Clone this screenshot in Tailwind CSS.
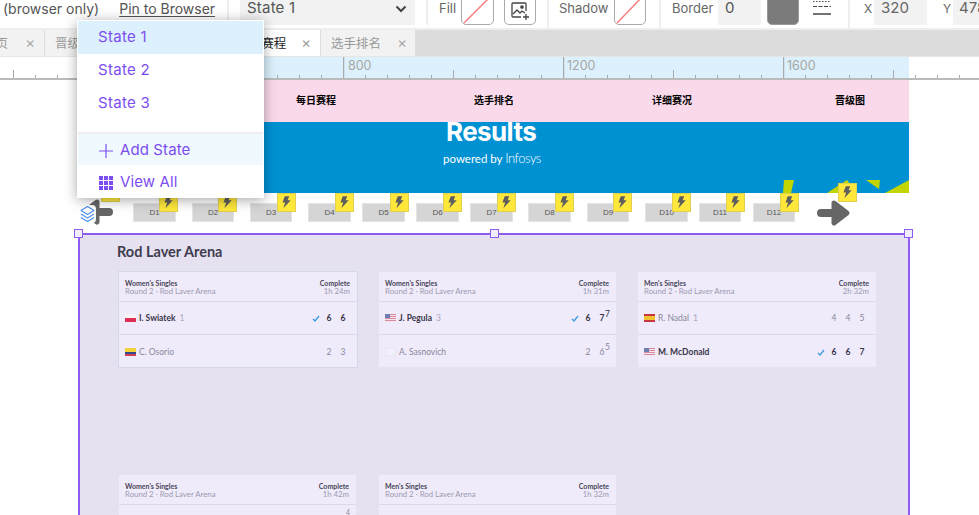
<!DOCTYPE html>
<html><head><meta charset="utf-8"><script src="https://cdn.jsdelivr.net/npm/@tailwindcss/browser@4"></script></head>
<body class="m-0 bg-white">
<div class="relative w-[979px] h-[515px] overflow-hidden bg-white font-['Inter',sans-serif] flex flex-col">
  <!-- toolbar -->
  <div class="h-[30px] flex-none flex items-start border-b-2 border-[#eeeeee] text-[#555555] overflow-hidden">
    <div class="w-[229px] flex-none h-[33px] -mt-2 flex items-center border-r-2 border-[#eeeeee] text-[14px]"><span class="ml-[3px]">(browser only)</span><span class="ml-[20px] underline underline-offset-2">Pin to Browser</span></div>
    <div class="w-[199px] flex-none -mt-2 border-r-2 border-[#eeeeee] h-[33px] pl-[11px]"><div class="w-[175px] h-[33px] bg-[#f2f2f2] flex items-center justify-between pl-[7px] pr-[8px] text-[15px] tracking-[0.2px]"><span>State 1</span><svg width="12" height="8" viewBox="0 0 12 8"><path d="M1.5 1.5 6 6l4.5-4.500" fill="none" stroke="#444" stroke-width="2"/></svg></div></div>
    <div class="w-[121px] flex-none -mt-2 h-[38px] border-r-2 border-[#eeeeee] flex items-start pt-0">
      <span class="ml-[11px] mt-[6px] text-[13px] text-[#666666] leading-5 w-[16px]">Fill</span>
      <div class="ml-[6px] w-[33px] h-[33px] rounded-[5px] border border-[#aaaaaa] overflow-hidden"><svg width="31" height="31" viewBox="0 0 31 31"><line x1="2" y1="30" x2="31" y2="1" stroke="#f77f7f" stroke-width="1.5"/></svg></div>
      <div class="ml-[10px] w-[32px] h-[33px] rounded-[5px] border border-[#aaaaaa] flex items-end justify-center pb-[3px]"><svg width="20" height="20" viewBox="0 0 20 20" fill="none" stroke="#444" stroke-width="1.3"><path d="M16 10V3a1 1 0 0 0-1-1H3a1 1 0 0 0-1 1v12a1 1 0 0 0 1 1h8"/><path d="M3 13l4-4 3 3 2-2 3 2"/><circle cx="12" cy="6" r="1.2" fill="#444"/><path d="M16 13v6M13 16h6"/></svg></div>
    </div>
    <div class="w-[112px] flex-none -mt-2 h-[38px] border-r-2 border-[#eeeeee] flex items-start">
      <span class="ml-[10px] mt-[6px] text-[13px] text-[#666666] leading-5 w-[48px]">Shadow</span>
      <div class="ml-[7px] w-[32px] h-[33px] rounded-[5px] border border-[#aaaaaa] overflow-hidden"><svg width="30" height="31" viewBox="0 0 30 31"><line x1="2" y1="30" x2="30" y2="1" stroke="#f77f7f" stroke-width="1.5"/></svg></div>
    </div>
    <div class="w-[189px] flex-none -mt-2 h-[38px] border-r-2 border-[#eeeeee] flex items-start">
      <span class="ml-[11px] mt-[6px] text-[13px] text-[#666666] leading-5 w-[40px]">Border</span>
      <div class="ml-[6px] w-[43px] h-[33px] bg-[#f2f2f2] text-[15px] pl-[7px] flex items-center">0</div>
      <div class="ml-[6px] w-[32px] h-[33px] rounded-[5px] bg-[#7b7b7b] border border-[#999999]"></div>
      <svg class="ml-[14px] mt-[8px]" width="18" height="17" viewBox="0 0 18 17" stroke="#444"><path d="M0 1.500h18" stroke-dasharray="1.5 1.5"/><path d="M0 6.500h18" stroke-dasharray="4 1.5"/><path d="M0 14h18" stroke-width="1.5"/></svg>
    </div>
    <div class="flex-none -mt-2 h-[33px] flex items-center text-[#666666]">
      <span class="ml-[14px] text-[12px] w-[10px]">X</span>
      <div class="w-[53px] h-[33px] bg-[#f2f2f2] text-[15px] pl-[7px] flex items-center">320</div>
      <span class="ml-[16px] text-[12px] w-[10px]">Y</span>
      <div class="w-[60px] h-[33px] bg-[#f2f2f2] text-[15px] pl-[6px] flex items-center">478</div>
    </div>
  </div>
  <!-- tabs -->
  <div class="h-[26px] flex-none bg-[#dcdcdc] flex font-['Noto_Sans_CJK_SC',sans-serif] text-[12.5px] text-[#999999] whitespace-nowrap">
    <div class="w-[44px] bg-[#f2f2f2] flex items-center justify-between pr-[9px] overflow-hidden"><span class="-ml-[17px]">首页</span><span class="font-['Inter'] text-[15px] font-light">×</span></div>
    <div class="ml-px w-[178px] bg-[#f2f2f2] flex items-center pl-[10px]">晋级图</div>
    <div class="ml-px w-[96px] bg-white flex items-center justify-end pr-[9px] text-[#222222]"><span class="mr-[15px]">每日赛程</span><span class="font-['Inter'] text-[15px] font-light text-[#888888]">×</span></div>
    <div class="ml-px w-[94px] bg-[#f2f2f2] flex items-center justify-between pl-[10px] pr-[8px]"><span>选手排名</span><span class="font-['Inter'] text-[15px] font-light">×</span></div>
  </div>
  <!-- ruler -->
  <div class="h-[24px] flex-none relative bg-white overflow-hidden">
    <div class="absolute left-[78px] w-[831px] top-0 bottom-0 bg-[#dcf1fd]"></div>
    <svg class="absolute inset-0" width="979" height="24" viewBox="0 0 979 24">
      <defs><pattern id="t" patternUnits="userSpaceOnUse" x="123" y="0" width="220" height="24"><g stroke="#aaaaaa"><path d="M.5 0v24" stroke-width="1.5"/><path d="M22.500 19v4M44.500 19v4M66.500 19v4M88.500 19v4M132.500 19v4M154.500 19v4M176.500 19v4M198.500 19v4"/><path d="M110.500 14v9"/></g></pattern></defs>
      <rect width="979" height="24" fill="url(#t)"/><rect y="22" width="979" height="2" fill="#bbbbbb"/>
    </svg>
    <div class="absolute left-0 right-0 top-0 h-px bg-[#e6e6e6]"></div>
    <span class="absolute left-[348px] top-0 text-[12.5px] text-[#a6a6a6] leading-5">800</span>
    <span class="absolute left-[567px] top-0 text-[12.5px] text-[#a6a6a6] leading-5">1200</span>
    <span class="absolute left-[787px] top-0 text-[12.5px] text-[#a6a6a6] leading-5">1600</span>
  </div>
  <!-- canvas -->
  <div class="relative flex-1">
    <div class="absolute left-[78px] top-0 w-[831px] h-[42px] bg-[#fadaea] font-['Noto_Sans_CJK_SC',sans-serif] text-[10px] font-bold text-black">
      <span class="absolute left-[218px] top-[13px] leading-[14px]">每日赛程</span><span class="absolute left-[396px] top-[13px] leading-[14px]">选手排名</span><span class="absolute left-[574px] top-[13px] leading-[14px]">详细赛况</span><span class="absolute left-[757px] top-[13px] leading-[14px]">晋级图</span>
    </div>
    <div class="absolute left-[78px] top-[42px] w-[831px] h-[71px] bg-[#0091d3] overflow-hidden text-white font-['Lato',sans-serif]">
      <div class="absolute left-[368px] -top-[6px] text-[26px] font-bold leading-[32px] font-['Inter'] tracking-[-0.6px]">Results</div>
      <div class="absolute left-[365px] top-[29px] text-[11.5px] leading-[14px]">powered by <span class="font-light text-[13px] tracking-[-0.5px]">Infosys</span></div>
      <svg class="absolute left-0 top-0" width="831" height="71" viewBox="0 0 831 71" fill="#c3d500"><path d="M706 58h10l-3 13h-8zM749 71l20-13 10 13zM788 58h14l-1 9zM807 71l24-13v13z"/></svg>
    </div>
    <!-- days -->
    <div class="absolute left-[133px] top-[123px] w-[43px] h-[19px] bg-[#d5d5d5] border border-[#e4e4e4] text-[8px] font-['Liberation_Sans'] text-[#555555] flex items-center justify-center">D1</div>
    <div class="absolute left-[192px] top-[123px] w-[42px] h-[19px] bg-[#d5d5d5] border border-[#e4e4e4] text-[8px] font-['Liberation_Sans'] text-[#555555] flex items-center justify-center">D2</div>
    <div class="absolute left-[250px] top-[123px] w-[42px] h-[19px] bg-[#d5d5d5] border border-[#e4e4e4] text-[8px] font-['Liberation_Sans'] text-[#555555] flex items-center justify-center">D3</div>
    <div class="absolute left-[308px] top-[123px] w-[43px] h-[19px] bg-[#d5d5d5] border border-[#e4e4e4] text-[8px] font-['Liberation_Sans'] text-[#555555] flex items-center justify-center">D4</div>
    <div class="absolute left-[362px] top-[123px] w-[43px] h-[19px] bg-[#d5d5d5] border border-[#e4e4e4] text-[8px] font-['Liberation_Sans'] text-[#555555] flex items-center justify-center">D5</div>
    <div class="absolute left-[416px] top-[123px] w-[43px] h-[19px] bg-[#d5d5d5] border border-[#e4e4e4] text-[8px] font-['Liberation_Sans'] text-[#555555] flex items-center justify-center">D6</div>
    <div class="absolute left-[470px] top-[123px] w-[43px] h-[19px] bg-[#d5d5d5] border border-[#e4e4e4] text-[8px] font-['Liberation_Sans'] text-[#555555] flex items-center justify-center">D7</div>
    <div class="absolute left-[528px] top-[123px] w-[43px] h-[19px] bg-[#d5d5d5] border border-[#e4e4e4] text-[8px] font-['Liberation_Sans'] text-[#555555] flex items-center justify-center">D8</div>
    <div class="absolute left-[587px] top-[123px] w-[42px] h-[19px] bg-[#d5d5d5] border border-[#e4e4e4] text-[8px] font-['Liberation_Sans'] text-[#555555] flex items-center justify-center">D9</div>
    <div class="absolute left-[645px] top-[123px] w-[43px] h-[19px] bg-[#d5d5d5] border border-[#e4e4e4] text-[8px] font-['Liberation_Sans'] text-[#555555] flex items-center justify-center">D10</div>
    <div class="absolute left-[699px] top-[123px] w-[42px] h-[19px] bg-[#d5d5d5] border border-[#e4e4e4] text-[8px] font-['Liberation_Sans'] text-[#555555] flex items-center justify-center">D11</div>
    <div class="absolute left-[753px] top-[123px] w-[42px] h-[19px] bg-[#d5d5d5] border border-[#e4e4e4] text-[8px] font-['Liberation_Sans'] text-[#555555] flex items-center justify-center">D12</div>
    <!-- badges -->
    <svg width="0" height="0" class="absolute"><defs><path id="b" d="M7.500 1.500h5L10.800 6h3.400L6 15l2-6.500H5z" fill="#5e5e5e"/></defs></svg>
    <div class="absolute left-[101px] top-[112px] w-[19px] h-[10px] bg-[#ffe83b] border border-[#e0cf50]"></div>
    <svg class="absolute left-[159px] top-[113px] bg-[#ffe83b] border border-[#e0cf50]" width="19" height="19" viewBox="0 0 19 17"><use href="#b"/></svg>
    <svg class="absolute left-[218px] top-[113px] bg-[#ffe83b] border border-[#e0cf50]" width="19" height="19" viewBox="0 0 19 17"><use href="#b"/></svg>
    <svg class="absolute left-[277px] top-[113px] bg-[#ffe83b] border border-[#e0cf50]" width="19" height="19" viewBox="0 0 19 17"><use href="#b"/></svg>
    <svg class="absolute left-[335px] top-[113px] bg-[#ffe83b] border border-[#e0cf50]" width="19" height="19" viewBox="0 0 19 17"><use href="#b"/></svg>
    <svg class="absolute left-[390px] top-[113px] bg-[#ffe83b] border border-[#e0cf50]" width="19" height="19" viewBox="0 0 19 17"><use href="#b"/></svg>
    <svg class="absolute left-[443px] top-[113px] bg-[#ffe83b] border border-[#e0cf50]" width="19" height="19" viewBox="0 0 19 17"><use href="#b"/></svg>
    <svg class="absolute left-[497px] top-[113px] bg-[#ffe83b] border border-[#e0cf50]" width="19" height="19" viewBox="0 0 19 17"><use href="#b"/></svg>
    <svg class="absolute left-[555px] top-[113px] bg-[#ffe83b] border border-[#e0cf50]" width="19" height="19" viewBox="0 0 19 17"><use href="#b"/></svg>
    <svg class="absolute left-[613px] top-[113px] bg-[#ffe83b] border border-[#e0cf50]" width="19" height="19" viewBox="0 0 19 17"><use href="#b"/></svg>
    <svg class="absolute left-[672px] top-[113px] bg-[#ffe83b] border border-[#e0cf50]" width="19" height="19" viewBox="0 0 19 17"><use href="#b"/></svg>
    <svg class="absolute left-[726px] top-[113px] bg-[#ffe83b] border border-[#e0cf50]" width="19" height="19" viewBox="0 0 19 17"><use href="#b"/></svg>
    <svg class="absolute left-[780px] top-[113px] bg-[#ffe83b] border border-[#e0cf50]" width="19" height="19" viewBox="0 0 19 17"><use href="#b"/></svg>
    <!-- arrows and layers -->
    <svg class="absolute left-[80px] top-[118px]" width="34" height="28" viewBox="0 0 34 28" fill="#666666" stroke="#666666" stroke-linecap="round" stroke-linejoin="round"><path d="M29 14H9" stroke-width="8"/><path d="M17 4 4 14l13 10z" stroke-width="5"/></svg>
    <svg class="absolute left-[79px] top-[125px] bg-white rounded-sm" width="17" height="18" viewBox="0 0 17 18" fill="none" stroke="#4a8ef0" stroke-width="1.1" stroke-linejoin="round"><path d="M8.500 1.500 15 5.500 8.500 9.500 2 5.500z"/><path d="M2 9l6.500 4L15 9M2 12.500l6.500 4 6.500-4"/></svg>
    <svg class="absolute left-[817px] top-[119px]" width="34" height="28" viewBox="0 0 34 28" fill="#666666" stroke="#666666" stroke-linecap="round" stroke-linejoin="round"><path d="M4 14h21" stroke-width="8"/><path d="M17 4l13 10-13 10z" stroke-width="5"/></svg>
    <svg class="absolute left-[838px] top-[103px] bg-[#ffe83b] border border-[#e0cf50]" width="19" height="19" viewBox="0 0 19 17"><use href="#b"/></svg>
    <!-- frame -->
    <div class="absolute left-[78px] top-[153px] w-[832px] h-[320px] bg-[#e5e1f1] border-2 border-[#8f5cf0] border-b-0 font-['Lato',sans-serif]">
      <div class="absolute left-[37px] top-[7px] text-[14.5px] leading-5 font-bold text-[#413d4f]">Rod Laver Arena</div>
      <div class="absolute left-[38px] top-[36px] w-[240px] h-[97px] bg-[#efebfb] border border-[#d5d8ec] flex flex-col">
        <div class="h-[30px] flex-none border-b border-[#dcd9ec] flex justify-between pl-[6px] pr-[7px] pt-[7px] text-[7px] leading-[8px]"><div><div class="font-bold text-[#4a4658]">Women's Singles</div><div class="text-[#9d9ab0] text-[7.8px]">Round 2 · Rod Laver Arena</div></div><div class="text-right"><div class="font-bold text-[#4a4658]">Complete</div><div class="text-[#9d9ab0] text-[7.8px]">1h 24m</div></div></div>
        <div class="h-[33px] flex-none border-b border-[#dcd9ec] flex items-center pl-[6px] pr-[7px] text-[8.500px] font-bold text-[#3a3648]"><svg class="mr-[3px]" width="11" height="8" viewBox="0 0 11 8"><rect width="11" height="4" fill="#f5f3f8"/><rect y="4" width="11" height="4" fill="#dc2f55"/></svg><span>I. Swiatek</span><span class="ml-1 font-normal text-[#aaa8bb]">1</span><svg class="ml-auto mr-[2px]" width="8" height="7" viewBox="0 0 8 7" fill="none" stroke="#3b9be0" stroke-width="1.3"><path d="M1 4l2 2 4-5"/></svg><span class="w-[14px] text-center">6</span><span class="w-[14px] text-center">6</span></div>
        <div class="flex-1 flex items-center pl-[6px] pr-[7px] pt-[2px] text-[8.500px] text-[#8a8799]"><svg class="mr-[3px]" width="11" height="8" viewBox="0 0 11 8"><rect width="11" height="4" fill="#f4d23c"/><rect y="4" width="11" height="2" fill="#33478f"/><rect y="6" width="11" height="2" fill="#cf3d54"/></svg><span>C. Osorio</span><span class="ml-auto w-[14px] text-center">2</span><span class="w-[14px] text-center">3</span></div>
      </div>
      <div class="absolute left-[298px] top-[36px] w-[239px] h-[97px] bg-[#efebfb] border border-[#e6e2f4] flex flex-col">
        <div class="h-[30px] flex-none border-b border-[#dcd9ec] flex justify-between pl-[6px] pr-[7px] pt-[7px] text-[7px] leading-[8px]"><div><div class="font-bold text-[#4a4658]">Women's Singles</div><div class="text-[#9d9ab0] text-[7.8px]">Round 2 · Rod Laver Arena</div></div><div class="text-right"><div class="font-bold text-[#4a4658]">Complete</div><div class="text-[#9d9ab0] text-[7.8px]">1h 31m</div></div></div>
        <div class="h-[33px] flex-none border-b border-[#dcd9ec] flex items-center pl-[6px] pr-[7px] text-[8.500px] font-bold text-[#3a3648]"><svg class="mr-[3px]" width="11" height="8" viewBox="0 0 11 8"><rect width="11" height="8" fill="#d98a9c"/><path d="M0 1.500h11M0 3.500h11M0 5.500h11M0 7.500h11" stroke="#f3e6ee"/><rect width="5" height="4" fill="#6f7db5"/></svg><span>J. Pegula</span><span class="ml-1 font-normal text-[#aaa8bb]">3</span><svg class="ml-auto mr-[2px]" width="8" height="7" viewBox="0 0 8 7" fill="none" stroke="#3b9be0" stroke-width="1.3"><path d="M1 4l2 2 4-5"/></svg><span class="w-[14px] text-center">6</span><span class="w-[14px] text-center relative">7<span class="absolute left-[10px] -top-[4px] font-normal">7</span></span></div>
        <div class="flex-1 flex items-center pl-[6px] pr-[7px] pt-[2px] text-[8.500px] text-[#8a8799]"><svg class="mr-[3px]" width="11" height="8" viewBox="0 0 11 8"><rect x=".5" y=".5" width="10" height="7" fill="#f3f0fc" stroke="#e9e5f5"/></svg><span>A. Sasnovich</span><span class="ml-auto w-[14px] text-center">2</span><span class="w-[14px] text-center relative">6<span class="absolute left-[10px] -top-[5px]">5</span></span></div>
      </div>
      <div class="absolute left-[557px] top-[36px] w-[240px] h-[97px] bg-[#efebfb] border border-[#e6e2f4] flex flex-col">
        <div class="h-[30px] flex-none border-b border-[#dcd9ec] flex justify-between pl-[6px] pr-[7px] pt-[7px] text-[7px] leading-[8px]"><div><div class="font-bold text-[#4a4658]">Men's Singles</div><div class="text-[#9d9ab0] text-[7.8px]">Round 2 · Rod Laver Arena</div></div><div class="text-right"><div class="font-bold text-[#4a4658]">Complete</div><div class="text-[#9d9ab0] text-[7.8px]">2h 32m</div></div></div>
        <div class="h-[33px] flex-none border-b border-[#dcd9ec] flex items-center pl-[6px] pr-[7px] text-[8.500px] text-[#8a8799]"><svg class="mr-[3px]" width="11" height="8" viewBox="0 0 11 8"><rect width="11" height="8" fill="#c9363f"/><rect y="2" width="11" height="4" fill="#f2c230"/></svg><span>R. Nadal</span><span class="ml-1 text-[#aaa8bb]">1</span><span class="ml-auto w-[14px] text-center">4</span><span class="w-[14px] text-center">4</span><span class="w-[14px] text-center">5</span></div>
        <div class="flex-1 flex items-center pl-[6px] pr-[7px] pt-[2px] text-[8.500px] font-bold text-[#3a3648]"><svg class="mr-[3px]" width="11" height="8" viewBox="0 0 11 8"><rect width="11" height="8" fill="#d98a9c"/><path d="M0 1.500h11M0 3.500h11M0 5.500h11M0 7.500h11" stroke="#f3e6ee"/><rect width="5" height="4" fill="#6f7db5"/></svg><span>M. McDonald</span><svg class="ml-auto mr-[2px]" width="8" height="7" viewBox="0 0 8 7" fill="none" stroke="#3b9be0" stroke-width="1.3"><path d="M1 4l2 2 4-5"/></svg><span class="w-[14px] text-center">6</span><span class="w-[14px] text-center">6</span><span class="w-[14px] text-center">7</span></div>
      </div>
      <div class="absolute left-[38px] top-[239px] w-[239px] h-[96px] bg-[#efebfb] border border-[#e6e2f4] flex flex-col">
        <div class="h-[30px] flex-none border-b border-[#dcd9ec] flex justify-between pl-[6px] pr-[7px] pt-[7px] text-[7px] leading-[8px]"><div><div class="font-bold text-[#4a4658]">Women's Singles</div><div class="text-[#9d9ab0] text-[7.8px]">Round 2 · Rod Laver Arena</div></div><div class="text-right"><div class="font-bold text-[#4a4658]">Complete</div><div class="text-[#9d9ab0] text-[7.8px]">1h 42m</div></div></div>
        <div class="text-right pr-[6px] text-[7px] leading-[8px] text-[#8a8799] pt-[3px]">4</div>
      </div>
      <div class="absolute left-[298px] top-[239px] w-[239px] h-[96px] bg-[#efebfb] border border-[#e6e2f4] flex flex-col">
        <div class="h-[30px] flex-none border-b border-[#dcd9ec] flex justify-between pl-[6px] pr-[7px] pt-[7px] text-[7px] leading-[8px]"><div><div class="font-bold text-[#4a4658]">Men's Singles</div><div class="text-[#9d9ab0] text-[7.8px]">Round 2 · Rod Laver Arena</div></div><div class="text-right"><div class="font-bold text-[#4a4658]">Complete</div><div class="text-[#9d9ab0] text-[7.8px]">1h 32m</div></div></div>
      </div>
    </div>
    <div class="absolute left-[74px] top-[149px] w-[9px] h-[9px] bg-[#f1eefb] border border-[#8f5cf0]"></div>
    <div class="absolute left-[490px] top-[149px] w-[9px] h-[9px] bg-[#f1eefb] border border-[#8f5cf0]"></div>
    <div class="absolute left-[904px] top-[149px] w-[9px] h-[9px] bg-[#f1eefb] border border-[#8f5cf0]"></div>
  </div>
  <!-- dropdown -->
  <div class="absolute left-[77px] top-[20px] w-[187px] h-[178px] bg-white border border-white shadow-[0_2px_12px_rgba(0,0,0,0.35)] text-[15px] text-[#7c4df0] tracking-[0.3px] flex flex-col">
    <div class="h-[33px] flex-none bg-[#dcf1fd] flex items-center pl-[20px]">State 1</div>
    <div class="h-[33px] flex-none flex items-center pl-[20px]">State 2</div>
    <div class="h-[33px] flex-none flex items-center pl-[20px]">State 3</div>
    <div class="flex-1"></div>
    <div class="h-[33px] flex-none bg-[#f0f9fe] border-t-2 border-[#eeeeee] flex items-center pl-[21px] pt-[2px] gap-[7px] tracking-[0.1px]"><svg width="14" height="14" viewBox="0 0 14 14" stroke="#7c4df0" stroke-width="1.2"><path d="M7 0v14M0 7h14"/></svg><span>Add State</span></div>
    <div class="h-[32px] flex-none flex items-center pl-[21px] pt-[3px] gap-[7px] tracking-[0.1px]"><svg width="14" height="14" viewBox="0 0 14 14" fill="#7c4df0"><path d="M0 0h4v4H0zM5 0h4v4H5zM10 0h4v4h-4zM0 5h4v4H0zM5 5h4v4H5zM10 5h4v4h-4zM0 10h4v4H0zM5 10h4v4H5zM10 10h4v4h-4z"/></svg><span>View All</span></div>
  </div>
</div>
</body></html>
